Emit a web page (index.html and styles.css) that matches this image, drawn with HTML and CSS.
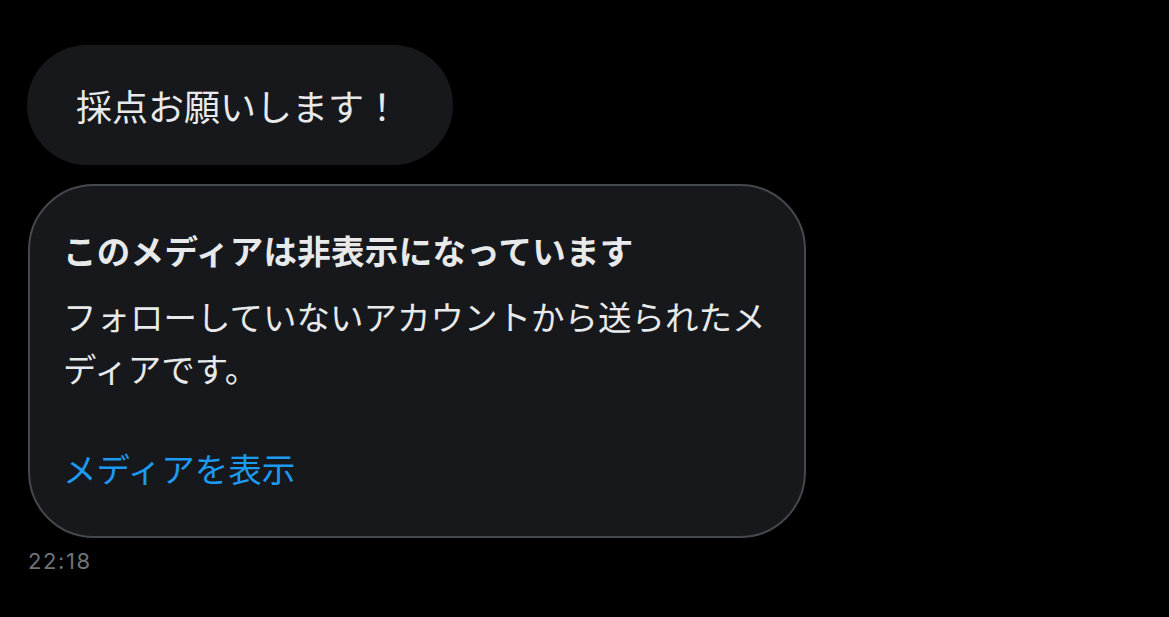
FILE: index.html
```html
<!DOCTYPE html>
<html lang="ja">
<head>
<meta charset="utf-8">
<link rel="stylesheet" href="styles.css">
</head>
<body>
<div class="thread">
  <div class="bubble">採点お願いします！</div>
  <div class="card">
    <p class="card-title">このメディアは非表示になっています</p>
    <p class="card-body">フォローしていないアカウントから送られたメディアです。</p>
    <p class="card-link">メディアを表示</p>
  </div>
  <div class="time">22:18</div>
</div>
</body>
</html>
```

FILE: styles.css
```css
html, body {
  margin: 0;
  padding: 0;
  background: #000;
}
body {
  width: 1169px;
  height: 617px;
  overflow: hidden;
  font-family: "Noto Sans CJK JP", "Noto Sans", sans-serif;
  color: #e7e9ea;
}
.thread {
  display: flex;
  flex-direction: column;
  align-items: flex-start;
  padding: 45px 0 0 27px;
}
.bubble {
  height: 120px;
  box-sizing: border-box;
  display: flex;
  align-items: center;
  padding: 0 53px 0 49px;
  border-radius: 60px;
  background: #16181c;
  font-size: 36px;
  line-height: 1;
}
.card {
  margin-top: 19px;
  margin-left: 1px;
  width: 778px;
  box-sizing: border-box;
  border: 2px solid #45484c;
  border-radius: 66px;
  background: #16181c;
  padding: 38px 27px 42px 33px;
}
.card p {
  margin: 0;
  font-size: 33.5px;
  line-height: 52px;
}
.card-title {
  font-weight: 700;
  letter-spacing: 0.3px;
}
.card .card-body {
  margin-top: 14px;
}
.card .card-link {
  margin-top: 48px;
  color: #1d9bf0;
}
.time {
  margin-top: 11px;
  margin-left: 1px;
  font-family: "Inter", "Liberation Sans", sans-serif;
  font-size: 22px;
  line-height: 24px;
  letter-spacing: 1.6px;
  color: #6e7378;
}
```
